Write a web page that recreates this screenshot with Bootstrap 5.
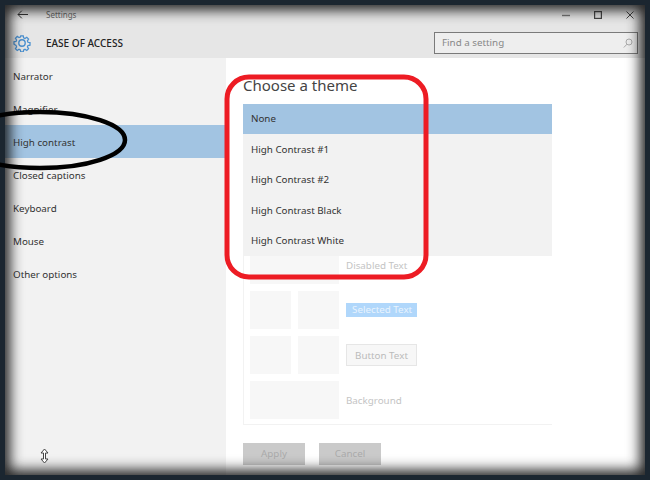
<!DOCTYPE html>
<html lang="en">
  <head>
    <meta charset="UTF-8" />
    <title>Settings</title>
    <link rel="stylesheet" href="https://cdn.jsdelivr.net/npm/bootstrap@5.3.0/dist/css/bootstrap.min.css" />
    <style>
      html, body { width: 650px; height: 480px; overflow: hidden; }
      body { font-family: "Noto Sans", "Open Sans", sans-serif; font-size: 9.8px; color: #333; background: #fff; position: relative; }
      .win-head { background: #e6e6e6; height: 58px; }
      .win-title { height: 26px; padding: 3px 0 0 17px; font-size: 8px; color: #666; }
      .win-title .ttl { margin-left: 18px; }
      .win-ctrls { margin-left: auto; gap: 24px; padding-right: 16px; }
      .win-sub { height: 32px; padding: 2px 0 0 13px; }
      .sub-name { margin-left: 15px; font-size: 10px; font-weight: 500; color: #222; }
      .find-box { margin-left: auto; margin-right: 12px; width: 204px; height: 22px; border: 1px solid #7a7a7a; background: #eee; color: #888; padding: 0 4px 0 7px; }
      .win-body { height: 422px; }
      .side-nav { width: 226px; background: #f2f2f2; padding-top: 1px; }
      .side-item { height: 33px; padding: 4px 0 0 13px; display: flex; align-items: center; }
      .side-item.sel { background: #a2c4e2; }
      .main-pane { padding: 15px 0 0 17px; }
      .pane-ttl { font-size: 15px; line-height: 24px; color: #444; margin-bottom: 7px; font-weight: 400; }
      .theme-list { width: 309px; }
      .theme-row { height: 30.4px; padding: 1px 0 0 8px; background: #f2f2f2; display: flex; align-items: center; }
      .theme-row.sel { background: #a2c4e2; }
      .preview-box { width: 309px; height: 169px; border: 1px solid #f2f2f2; border-top: 0; border-right: 0; padding-left: 6px; }
      .sw-row { display: flex; gap: 7px; align-items: center; margin-bottom: 7px; }
      .sw { width: 41px; height: 38px; background: #f7f7f7; }
      .sw-w { width: 89px; height: 38px; background: #f7f7f7; }
      .sw-first { height: 28px; }
      .sw-lbl { color: #c4c4c4; padding-top: 3px; }
      .sw-lbl.up { padding: 0 0 7px; }
      .sel-txt { background: #b0d7fb; color: #e8f3fd; padding: 0 0 0 6px; height: 14px; width: 71px; line-height: 14px; white-space: nowrap; }
      .btn-txt { border: 1px solid #e6e6e6; background: #f7f7f7; color: #bbb; width: 71px; height: 22px; line-height: 21px; text-align: center; }
      .act-btn { width: 62px; height: 22px; background: #cacaca; color: #aaa; border: 0; border-radius: 0; padding: 0; font-size: 9.8px; }
      .act-row { gap: 14px; margin-top: 18px; }
      .frame-shade { position: absolute; inset: 0; border: 5px solid #1b2630; box-shadow: inset 0 0 13px 5px rgba(15, 15, 15, .92); pointer-events: none; }
      .marks { position: absolute; left: 0; top: 0; }
      .size-cur { position: absolute; left: 40px; top: 448px; }
    </style>
  </head>
  <body>
    <div class="win-head">
      <div class="win-title d-flex align-items-center">
        <svg width="11" height="9" viewBox="0 0 11 9" fill="none" stroke="#333" stroke-width="1"><path d="M11 4.500H1M4.800 .7 1 4.500l3.800 3.800"/></svg>
        <span class="ttl">Settings</span>
        <div class="win-ctrls d-flex align-items-center">
          <svg width="8" height="8" viewBox="0 0 8 8"><path d="M0 4.500h8" stroke="#777" stroke-width="1.400"/></svg>
          <svg width="8" height="8" viewBox="0 0 8 8"><rect x=".6" y=".6" width="6.800" height="6.800" fill="none" stroke="#444" stroke-width="1.200"/></svg>
          <svg width="8" height="8" viewBox="0 0 8 8"><path d="M.5.5l7 7M7.500.5l-7 7" stroke="#444" stroke-width="1"/></svg>
        </div>
      </div>
      <div class="win-sub d-flex align-items-center">
        <svg width="18" height="18" viewBox="0 0 18 18" fill="none" stroke="#4a90d0" stroke-width="1.400"><circle cx="9" cy="9" r="3.200"/><path d="M7.600 1h2.800l.4 2.300 1.500.7 2-1.300 2 2-1.300 2 .6 1.500 2.300.4v2.800l-2.300.4-.6 1.500 1.300 2-2 2-2-1.300-1.500.6-.4 2.400H7.600l-.4-2.400-1.500-.6-2 1.300-2-2 1.300-2-.6-1.500L.1 10.400V7.600l2.300-.4.6-1.500-1.300-2 2-2 2 1.300 1.500-.7z" transform="translate(.9 .9) scale(.9)"/></svg>
        <span class="sub-name">EASE OF ACCESS</span>
        <div class="find-box d-flex align-items-center justify-content-between">
          <span>Find a setting</span>
          <svg width="10" height="10" viewBox="0 0 10 10" fill="none" stroke="#aaa" stroke-width="1"><circle cx="6" cy="4" r="3"/><path d="M4 6.200.8 9.500"/></svg>
        </div>
      </div>
    </div>
    <div class="win-body d-flex">
      <div class="side-nav">
        <div class="side-item">Narrator</div>
        <div class="side-item">Magnifier</div>
        <div class="side-item sel">High contrast</div>
        <div class="side-item">Closed captions</div>
        <div class="side-item">Keyboard</div>
        <div class="side-item">Mouse</div>
        <div class="side-item">Other options</div>
      </div>
      <div class="main-pane">
        <h2 class="pane-ttl">Choose a theme</h2>
        <div class="theme-list">
          <div class="theme-row sel">None</div>
          <div class="theme-row">High Contrast #1</div>
          <div class="theme-row">High Contrast #2</div>
          <div class="theme-row">High Contrast Black</div>
          <div class="theme-row">High Contrast White</div>
        </div>
        <div class="preview-box">
          <div class="sw-row"><div class="sw-w sw-first"></div><span class="sw-lbl up">Disabled Text</span></div>
          <div class="sw-row"><div class="sw"></div><div class="sw"></div><div class="sel-txt">Selected Text</div></div>
          <div class="sw-row"><div class="sw"></div><div class="sw"></div><div class="btn-txt">Button Text</div></div>
          <div class="sw-row"><div class="sw-w"></div><span class="sw-lbl">Background</span></div>
        </div>
        <div class="act-row d-flex">
          <button class="btn act-btn" type="button">Apply</button>
          <button class="btn act-btn" type="button">Cancel</button>
        </div>
      </div>
    </div>
    <div class="frame-shade"></div>
    <svg class="marks" width="650" height="480" viewBox="0 0 650 480" fill="none">
      <rect x="227" y="77" width="199" height="200" rx="22" stroke="#ed1c24" stroke-width="5"/>
      <ellipse cx="40" cy="140" rx="85" ry="28" stroke="#000" stroke-width="4.500"/>
    </svg>
    <svg class="size-cur" width="9" height="16" viewBox="0 0 9 16" fill="#fff" stroke="#444" stroke-width="1"><path d="M4.500 1 8 5H5.500v6H8l-3.500 4L1 11h2.500V5H1z"/></svg>
  </body>
</html>
